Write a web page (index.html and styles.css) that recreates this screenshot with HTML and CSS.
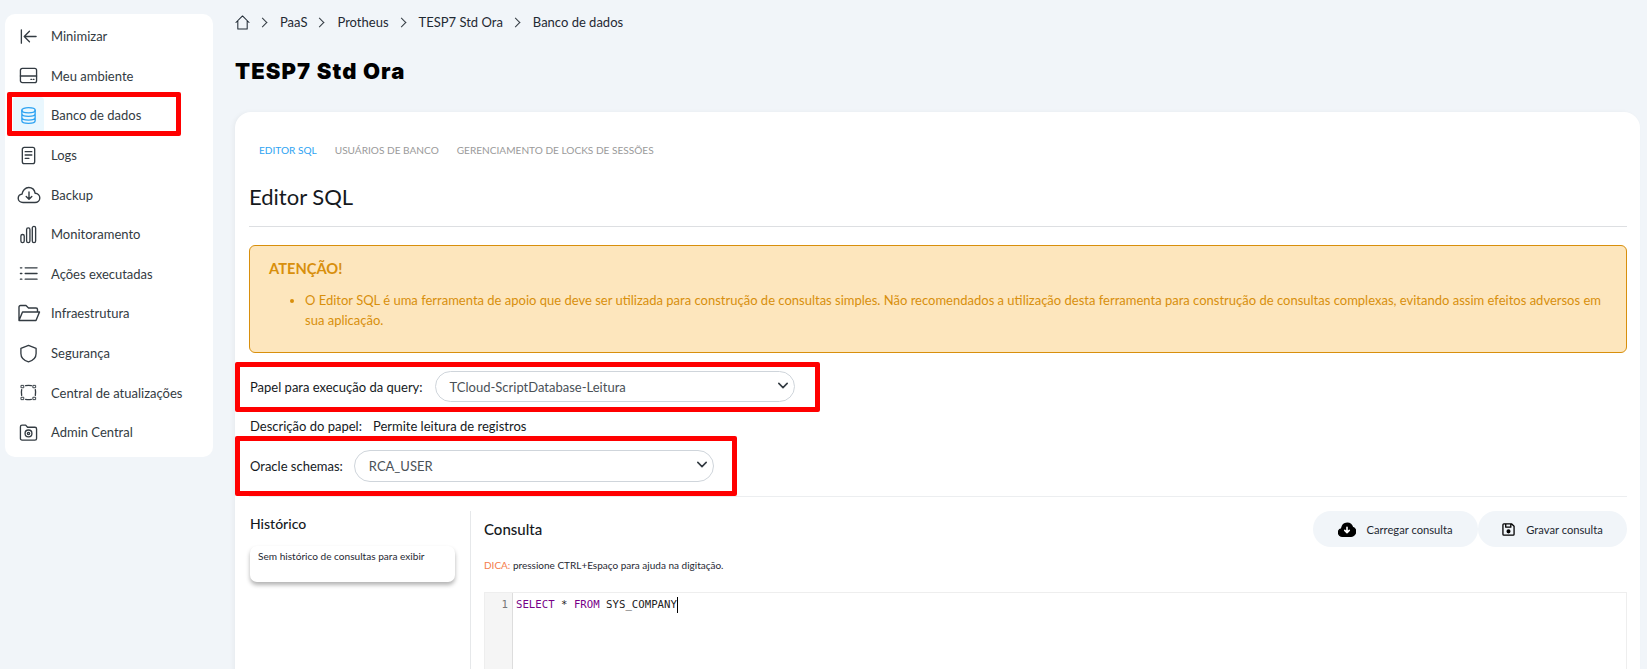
FILE: index.html
```html
<!DOCTYPE html>
<html lang="en">
<head>
  <meta charset="UTF-8">
  <meta name="viewport" content="width=device-width, initial-scale=1.0">
  <title>TESP7 Std Ora</title>
  <link rel="stylesheet" href="styles.css">
</head>
<body>
  <!-- Sidebar -->
  <nav class="sidebar">
    <a class="nav-item">
      <span class="nav-icon"><svg viewBox="0 0 20 20"><path d="M2.500 3v14M18 10H6M11 4.500L5.500 10l5.500 5.500"/></svg></span>
      Minimizar
    </a>
    <a class="nav-item">
      <span class="nav-icon"><svg viewBox="0 0 20 20"><rect x="1.500" y="2.500" width="17" height="15" rx="2"/><path d="M1.500 10.500h17M12.500 14h.8M15 14h.8"/></svg></span>
      Meu ambiente
    </a>
    <a class="nav-item active">
      <span class="nav-icon"><svg viewBox="0 0 20 20"><ellipse cx="10" cy="4.500" rx="7" ry="2.800"/><path d="M3 4.500v11c0 1.500 3 2.800 7 2.800s7-1.300 7-2.800v-11M3 8.200c0 1.500 3 2.800 7 2.800s7-1.300 7-2.800M3 12c0 1.500 3 2.800 7 2.800s7-1.300 7-2.800"/></svg></span>
      Banco de dados
      <span class="mark mark-nav"></span>
    </a>
    <a class="nav-item">
      <span class="nav-icon"><svg viewBox="0 0 20 20"><rect x="3.500" y="1.500" width="13" height="17" rx="2"/><path d="M6.500 6h7M6.500 9.500h7M6.500 13h4"/></svg></span>
      Logs
    </a>
    <a class="nav-item">
      <span class="nav-icon"><svg class="wide" viewBox="0 0 24 20"><path d="M6 17.500c-2.700 0-4.800-1.800-4.800-4.200 0-2.200 1.700-3.900 3.800-4.200C5.500 5.600 8.300 2.500 11.700 2.500c3.200 0 5.800 2.400 6.500 5.800 2.600.2 4.600 2.300 4.600 4.700 0 2.500-2.200 4.500-4.800 4.500z"/><path d="M12 7v7M9.200 11.500l2.800 2.800 2.800-2.800"/></svg></span>
      Backup
    </a>
    <a class="nav-item">
      <span class="nav-icon"><svg viewBox="0 0 20 20"><rect x="2" y="10" width="3.500" height="8.500" rx="1.700"/><rect x="8" y="3" width="3.500" height="15.500" rx="1.700"/><rect x="14" y="1.500" width="3.500" height="17" rx="1.700"/></svg></span>
      Monitoramento
    </a>
    <a class="nav-item">
      <span class="nav-icon"><svg viewBox="0 0 20 20"><path d="M6.500 4h12.500M6.500 10h12.500M6.500 16h12.500M1.500 4h1.500M1.500 10h1.500M1.500 16h1.500"/></svg></span>
      Ações executadas
    </a>
    <a class="nav-item">
      <span class="nav-icon"><svg class="wide" viewBox="0 0 24 20"><path d="M2 17V4c0-.800.600-1.500 1.500-1.500h5.500l2.500 2.500h7.500c.800 0 1.500.600 1.500 1.500V9M2 17.500L5.500 9h17l-3.500 8.500z"/></svg></span>
      Infraestrutura
    </a>
    <a class="nav-item">
      <span class="nav-icon"><svg viewBox="0 0 20 20"><path d="M10 1.500l8 3v5.500c0 4.500-3.500 7.500-8 8.800-4.500-1.300-8-4.300-8-8.800V4.500z"/></svg></span>
      Segurança
    </a>
    <a class="nav-item">
      <span class="nav-icon"><svg viewBox="0 0 20 20"><path d="M7 2.800c2-.400 4-.400 6 0M2.800 13c-.400-2-.400-4 0-6M17.200 7c.400 2 .400 4 0 6M7 17.200c2 .400 4 .400 6 0"/><path class="corner" d="M2.500 2.500h2.500v2.500H2.500zM15 2.500h2.500v2.500H15zM2.500 15h2.500v2.500H2.500zM15 15h2.500v2.500H15z"/></svg></span>
      Central de atualizações
    </a>
    <a class="nav-item">
      <span class="nav-icon"><svg viewBox="0 0 20 20"><path d="M1.500 4c0-1 .700-1.800 1.700-1.800h3.800l2 2.300h7.800c1 0 1.700.800 1.700 1.700v10c0 1-.700 1.800-1.700 1.800H3.200c-1 0-1.700-.800-1.700-1.800z"/><circle cx="10" cy="11" r="3.600"/><circle cx="10" cy="11" r="1.200"/></svg></span>
      Admin Central
    </a>
  </nav>

  <main class="main">
    <div class="breadcrumb">
      <svg class="home" viewBox="0 0 16 16"><path d="M1 8l7-7 7 7M3 6.500V15h10V6.500"/></svg>
      <span class="crumb-sep"></span><span>PaaS</span>
      <span class="crumb-sep"></span><span>Protheus</span>
      <span class="crumb-sep"></span><span>TESP7 Std Ora</span>
      <span class="crumb-sep"></span><span>Banco de dados</span>
    </div>

    <h1 class="page-title">TESP7 Std Ora</h1>

    <section class="card">
      <div class="tabs">
        <span class="tab tab-active">EDITOR SQL</span>
        <span class="tab">USUÁRIOS DE BANCO</span>
        <span class="tab">GERENCIAMENTO DE LOCKS DE SESSÕES</span>
      </div>

      <h2 class="section-title">Editor SQL</h2>
      <div class="line"></div>

      <div class="alert">
        <div class="alert-title">ATENÇÃO!</div>
        <ul class="alert-list">
          <li>O Editor SQL é uma ferramenta de apoio que deve ser utilizada para construção de consultas simples. Não recomendados a utilização desta ferramenta para construção de consultas complexas, evitando assim efeitos adversos em sua aplicação.</li>
        </ul>
      </div>

      <div class="field field-role">
        <label class="field-label">Papel para execução da query:</label>
        <div class="select select-role">TCloud-ScriptDatabase-Leitura
          <svg class="chevron" viewBox="0 0 12 8"><path d="M1 1.500l5 5 5-5"/></svg>
        </div>
        <span class="mark mark-role"></span>
      </div>

      <div class="role-desc">
        <span class="field-label">Descrição do papel:</span>
        <span class="role-value">Permite leitura de registros</span>
      </div>

      <div class="field field-schema">
        <label class="field-label">Oracle schemas:</label>
        <div class="select select-schema">RCA_USER
          <svg class="chevron" viewBox="0 0 12 8"><path d="M1 1.500l5 5 5-5"/></svg>
        </div>
        <span class="mark mark-schema"></span>
      </div>

      <div class="line line-light"></div>

      <div class="workspace">
        <aside class="history">
          <h3 class="history-title">Histórico</h3>
          <div class="history-card">Sem histórico de consultas para exibir</div>
        </aside>

        <div class="query">
          <div class="query-head">
            <h3 class="query-title">Consulta</h3>
            <div class="query-actions">
              <button class="pill pill-load">
                <svg viewBox="0 0 20 16"><path class="solid" d="M5 15.500c-2.600 0-4.600-1.800-4.600-4.100 0-2 1.500-3.700 3.500-4C4.500 3.400 7 .800 10.200.800c2.900 0 5.300 2 6 4.800 2 .500 3.400 2.300 3.400 4.500 0 3-2.300 5.400-5 5.400z"/><path class="cut" d="M10 5.500v5.500M7.500 9l2.500 2.500L12.500 9"/></svg>
                Carregar consulta
              </button>
              <button class="pill pill-save">
                <svg viewBox="0 0 14 14"><path d="M1 2c0-.600.400-1 1-1h8.500L13 3.500V12c0 .600-.400 1-1 1H2c-.600 0-1-.400-1-1zM4 1v3.500h5.500V1"/><circle class="solid" cx="7" cy="9" r="1.500"/></svg>
                Gravar consulta
              </button>
            </div>
          </div>
          <p class="tip"><span class="tip-label">DICA:</span> pressione CTRL+Espaço para ajuda na digitação.</p>
          <div class="code-editor">
            <div class="gutter">1</div>
            <div class="code"><span class="kw">SELECT</span> * <span class="kw">FROM</span> SYS_COMPANY<span class="caret"></span></div>
          </div>
        </div>
      </div>
    </section>
  </main>
</body>
</html>
```

FILE: styles.css
```css
/* General */
body {
  margin: 0;
  height: 669px;
  overflow: hidden;
  display: flex;
  align-items: flex-start;
  background-color: #f1f5f9;
  color: #1f2933;
  font-family: Lato, Arial, sans-serif;
  font-size: 13px;
}

svg {
  fill: none;
  stroke: currentColor;
  stroke-width: 1.4;
  stroke-linecap: round;
  stroke-linejoin: round;
}

svg .solid {
  fill: currentColor;
}

svg .corner {
  stroke-width: 1;
}

/* Red annotation frames */
.mark {
  position: absolute;
  box-sizing: border-box;
  border: 5px solid #ff0000;
  border-radius: 2px;
  pointer-events: none;
}

.mark-nav {
  left: 2px;
  top: -4px;
  width: 174px;
  height: 44px;
}

.mark-role {
  left: -15px;
  top: -9px;
  width: 585px;
  height: 50px;
}

.mark-schema {
  left: -15px;
  top: -14px;
  width: 502px;
  height: 60px;
}

/* Sidebar */
.sidebar {
  flex: none;
  width: 208px;
  margin: 14px 0 0 5px;
  padding: 2.500px 0 4.500px;
  background-color: white;
  border-radius: 10px;
}

.nav-item {
  position: relative;
  display: flex;
  align-items: center;
  gap: 7px;
  height: 39.6px;
  padding-left: 8px;
  color: #333b42;
}

.nav-icon {
  flex: none;
  display: flex;
  align-items: center;
  justify-content: center;
  width: 31px;
  height: 36px;
  border-radius: 4px;
}

.nav-icon svg {
  width: 19px;
  height: 19px;
}

.nav-icon svg.wide {
  width: 24px;
  height: 20px;
}

.nav-item.active .nav-icon {
  background-color: #e9f7fe;
  color: #2ea3f2;
}

/* Main column */
.main {
  flex: 1;
  min-width: 0;
  margin-right: 7px;
  padding-left: 22px;
}

.breadcrumb {
  display: flex;
  align-items: center;
  height: 20px;
  margin-top: 12px;
}

.home {
  width: 15px;
  height: 15px;
  stroke-width: 1.1;
}

.crumb-sep {
  width: 6px;
  height: 6px;
  margin: 0 14px 0 9px;
  border-top: 1px solid #333b42;
  border-right: 1px solid #333b42;
  transform: rotate(45deg);
}

.page-title {
  margin: 25px 0 0;
  color: black;
  font-family: Inter, Arial, sans-serif;
  font-size: 22px;
  font-weight: 900;
  line-height: 28px;
  letter-spacing: 1.1px;
}

/* Card */
.card {
  height: 600px;
  margin-top: 27px;
  padding: 29px 13px 0 14px;
  background-color: white;
  border-radius: 16px;
  box-shadow: -2px 0 4px rgba(0, 0, 0, 0.04);
}

.tabs {
  display: flex;
  gap: 18px;
  padding-left: 10px;
  line-height: 18px;
}

.tab {
  color: #9a9a9a;
  font-size: 10.100px;
}

.tab-active {
  color: #2ea3f2;
}

.section-title {
  margin: 23px 0 0;
  color: #15191d;
  font-size: 22px;
  font-weight: 400;
  line-height: 30px;
}

.line {
  height: 1px;
  margin-top: 14px;
  background-color: #dddfe2;
}

/* Warning box */
.alert {
  box-sizing: border-box;
  height: 108px;
  margin-top: 18px;
  padding: 11px 19px;
  background-color: #fde6bd;
  border: 1px solid #d88f0c;
  border-radius: 6px;
  color: #d88f0c;
}

.alert-title {
  font-size: 14.700px;
  font-weight: 700;
  line-height: 22px;
}

.alert-list {
  margin: 11px 0 0;
  padding: 0 0 0 36px;
  line-height: 20px;
}

/* Form rows */
.field {
  position: relative;
  display: flex;
  align-items: center;
  margin-left: 1px;
  gap: 11px;
}

.field-role {
  margin-top: 18px;
  gap: 12px;
}

.field-schema {
  margin-top: 14px;
}

.field-label {
  color: #15191d;
}

.select {
  position: relative;
  box-sizing: border-box;
  display: flex;
  align-items: center;
  width: 360px;
  padding-left: 14px;
  background-color: white;
  border: 1px solid #cfd5db;
  border-radius: 16px;
  color: #4a5157;
}

.select-role {
  height: 31px;
}

.select-schema {
  height: 32px;
}

.chevron {
  position: absolute;
  right: 6px;
  top: 10px;
  width: 10px;
  height: 7px;
  stroke-width: 1.9;
  color: #333b42;
}

.role-desc {
  display: flex;
  gap: 11px;
  margin: 14px 0 0 1px;
  line-height: 20px;
}

.role-value {
  color: #15191d;
}

.line-light {
  margin-top: 14px;
  background-color: #eceef0;
}

/* Lower area */
.workspace {
  display: flex;
  margin-top: 14px;
  height: 300px;
}

.history {
  flex: none;
  width: 206px;
  padding: 3px 14px 0 1px;
  border-right: 1px solid #e6e8ea;
}

.history-title {
  margin: 0;
  color: #15191d;
  font-size: 14px;
  font-weight: 500;
  line-height: 20px;
}

.history-card {
  box-sizing: border-box;
  width: 205px;
  height: 36px;
  margin-top: 12px;
  padding: 4px 8px;
  background-color: white;
  border-radius: 7px;
  box-shadow: 0 3px 4px rgba(0, 0, 0, 0.3);
  font-size: 10.100px;
}

.query {
  flex: 1;
  min-width: 0;
  padding-left: 13px;
}

.query-head {
  display: flex;
  justify-content: space-between;
  align-items: center;
}

.query-title {
  margin: 0;
  color: #15191d;
  font-size: 15px;
  font-weight: 500;
}

.query-actions {
  display: flex;
}

.pill {
  display: flex;
  align-items: center;
  justify-content: center;
  height: 36px;
  padding: 0;
  background-color: #f1f5f9;
  border: none;
  border-radius: 18px;
  color: #1f2933;
  font-family: inherit;
  font-size: 11.200px;
}

.pill-load {
  width: 165px;
  gap: 10px;
}

.pill-load svg {
  width: 18px;
  height: 15px;
  color: black;
}

.pill-load .cut {
  stroke: white;
  stroke-width: 1.8;
}

.pill-save {
  width: 149px;
  gap: 11px;
}

.pill-save svg {
  width: 13px;
  height: 13px;
  color: black;
}

.tip {
  margin: 11px 0 0;
  font-size: 10px;
  line-height: 14px;
}

.tip-label {
  color: #f47c4a;
}

/* SQL editor */
.code-editor {
  display: flex;
  height: 200px;
  margin-top: 20px;
  border: 1px solid #eeeeee;
}

.gutter {
  flex: none;
  box-sizing: border-box;
  width: 28px;
  padding: 4px 4px 0 0;
  background-color: #f5f5f5;
  border-right: 1px solid #dddddd;
  color: #777777;
  font-family: "DejaVu Sans Mono", monospace;
  font-size: 10.700px;
  line-height: 16px;
  text-align: right;
}

.code {
  padding: 4px 0 0 3px;
  color: #222222;
  font-family: "DejaVu Sans Mono", monospace;
  font-size: 10.700px;
  line-height: 16px;
}

.kw {
  color: #770088;
}

.caret {
  display: inline-block;
  width: 1px;
  height: 16px;
  vertical-align: top;
  background-color: black;
}
```
